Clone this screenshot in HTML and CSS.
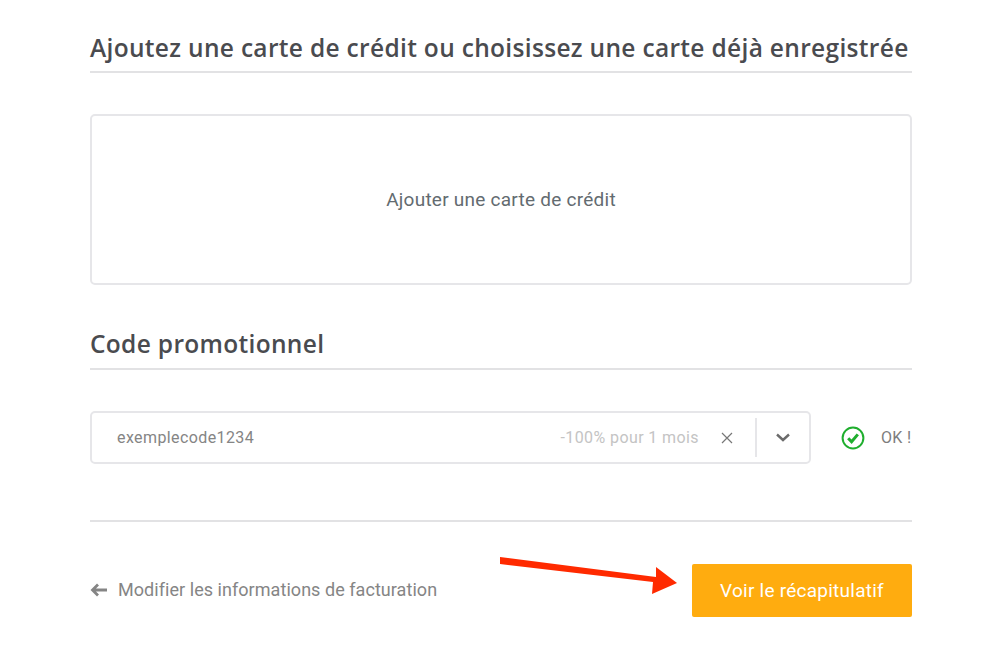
FILE: index.html
```html
<html>
  <head>
    <title>Paiement</title>
    <meta name="viewport" content="width=device-width, initial-scale=1">
    <link rel="stylesheet" href="styles.css">
  </head>
  <body>
    <main class="checkout">
      <h2 class="section-title">Ajoutez une carte de crédit ou choisissez une carte déjà enregistrée</h2>
      <a class="add-card">Ajouter une carte de crédit</a>

      <h2 class="section-title promo-title">Code promotionnel</h2>
      <div class="promo-row">
        <div class="promo-field">
          <span class="promo-code">exemplecode1234</span>
          <span class="promo-value">-100% pour 1 mois</span>
          <svg class="promo-clear" width="12" height="12" viewBox="0 0 12 12" fill="none">
            <path d="M1 1L11 11M11 1L1 11" stroke="#777" stroke-width="1.2" />
          </svg>
          <span class="promo-sep"></span>
          <svg class="promo-caret" width="14" height="9" viewBox="0 0 14 9" fill="none">
            <path d="M1 1.5L7 7L13 1.5" stroke="#6b6b6b" stroke-width="2.4" />
          </svg>
        </div>
        <svg class="promo-check" width="24" height="24" viewBox="0 0 24 24" fill="none">
          <circle cx="12" cy="12" r="10.4" stroke="#1fae2e" stroke-width="2" />
          <path d="M7.2 12.2L10.6 15.8L16.8 8.4" stroke="#1fae2e" stroke-width="3" />
        </svg>
        <span class="promo-status">OK !</span>
      </div>

      <div class="actions">
        <a class="back-link">
          <svg width="18" height="14" viewBox="0 0 18 14" fill="none">
            <path d="M17 7H3M8 1.5L2.5 7L8 12.5" stroke="#858585" stroke-width="2.8" />
          </svg>
          Modifier les informations de facturation
        </a>
        <a class="button-next">Voir le récapitulatif</a>
        <svg class="callout-arrow" width="182" height="46" viewBox="0 0 182 46" fill="none">
          <path d="M0 2L156 22L156 12L177 28L152 39L153 27L0 9Z" fill="#ff2a00" />
        </svg>
      </div>
    </main>
  </body>
</html>
```

FILE: styles.css
```css
body {
  margin: 0;
  background: #fff;
  font-family: Roboto, "Liberation Sans", sans-serif;
}

.checkout {
  width: 822px;
  margin-left: 90px;
  padding-top: 31px;
}

.section-title {
  margin: 0;
  padding-bottom: 7px;
  border-bottom: 2px solid #e2e2e4;
  font-family: "Open Sans", "Liberation Sans", sans-serif;
  font-size: 24.5px;
  line-height: 33px;
  font-weight: 600;
  letter-spacing: 0.32px;
  white-space: nowrap;
  color: #4a4b4f;
}

.add-card {
  display: flex;
  align-items: center;
  justify-content: center;
  height: 167px;
  margin-top: 41px;
  border: 2px solid #e6e6e9;
  border-radius: 5px;
  font-size: 19px;
  letter-spacing: 0.25px;
  color: #636b70;
}

.promo-title {
  margin-top: 42px;
  padding-bottom: 8px;
}

.promo-row {
  display: flex;
  align-items: center;
  margin-top: 41px;
}

.promo-field {
  display: flex;
  align-items: center;
  box-sizing: border-box;
  width: 721px;
  height: 53px;
  padding: 0 19px 0 25px;
  border: 2px solid #e6e6e9;
  border-radius: 5px;
  font-size: 16px;
  letter-spacing: 0.4px;
}

.promo-code {
  flex-grow: 1;
  color: #858585;
}

.promo-value {
  letter-spacing: 0.4px;
  color: #c4c4c4;
}

.promo-clear {
  margin-left: 22px;
}

.promo-sep {
  width: 2px;
  height: 39px;
  margin: 0 19px 0 22px;
  background: #e6e6e9;
}

.promo-check {
  margin-left: 30px;
}

.promo-status {
  margin-left: 16px;
  font-size: 16px;
  letter-spacing: 0.3px;
  color: #7d7d7d;
}

.actions {
  position: relative;
  display: flex;
  align-items: center;
  justify-content: space-between;
  margin-top: 56px;
  padding-top: 42px;
  border-top: 2px solid #e2e2e4;
}

.back-link {
  display: flex;
  align-items: center;
  gap: 10px;
  padding-bottom: 2px;
  font-size: 18px;
  letter-spacing: 0.05px;
  color: #858585;
}

.button-next {
  display: flex;
  align-items: center;
  justify-content: center;
  width: 220px;
  height: 53px;
  border-radius: 2px;
  background: #ffac0f;
  font-size: 19px;
  letter-spacing: 0.25px;
  color: #fff;
}

.callout-arrow {
  position: absolute;
  left: 410px;
  top: 33px;
}
```
